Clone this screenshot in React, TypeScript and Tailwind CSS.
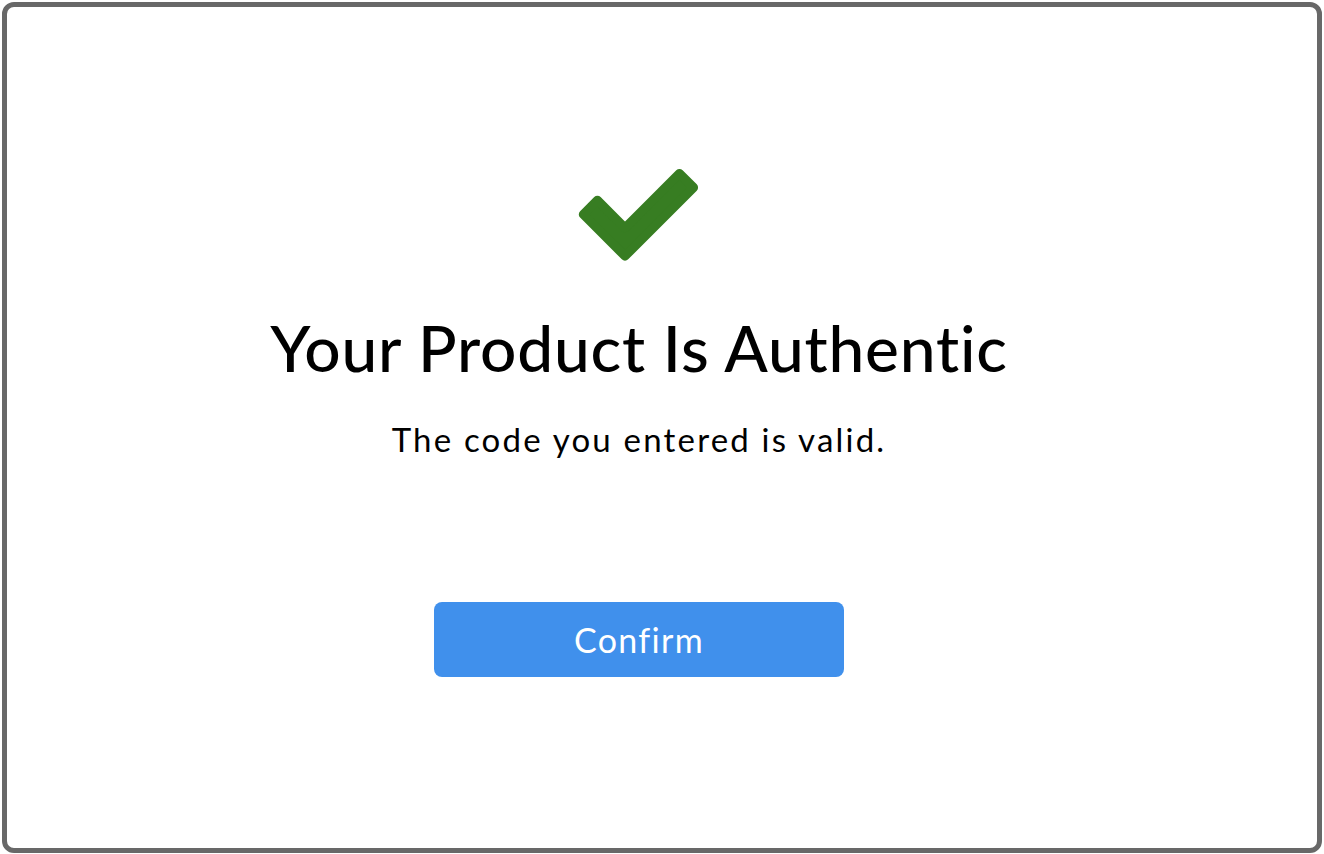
export default function App() {
  return (
    <div className="h-screen w-full bg-white pt-[2px] pl-[2px] pr-[2px] pb-[1px]" style={{ fontFamily: "Lato, 'Noto Sans', sans-serif" }}>
      <div className="h-full w-full rounded-[12px] border-[5px] border-[#686868] bg-white">
        <div className="flex flex-col items-center pt-[158px] pr-[46px]">
          {/* Check mark */}
          <svg width="124" height="98" viewBox="0 0 124 98" className="shrink-0">
            <polygon
              points="6.28,49.42 20.42,35.28 48,62.86 102.45,8.41 116.59,22.55 48,91.14"
              fill="#377d22"
              stroke="#377d22"
              strokeWidth="9"
              strokeLinejoin="round"
            />
          </svg>

          <h1 className="mt-[47px] text-[64px] leading-[1.2] font-medium tracking-[0.8px] text-black">
            Your Product Is Authentic
          </h1>
          <p className="mt-[33px] text-[33px] leading-[1.2] tracking-[2.2px] text-black">
            The code you entered is valid.
          </p>

          <button className="mt-[143px] h-[75px] w-[410px] rounded-[8px] bg-[#4090ec] text-[34px] tracking-[1.3px] text-white">
            Confirm
          </button>
        </div>
      </div>
    </div>
  );
}
